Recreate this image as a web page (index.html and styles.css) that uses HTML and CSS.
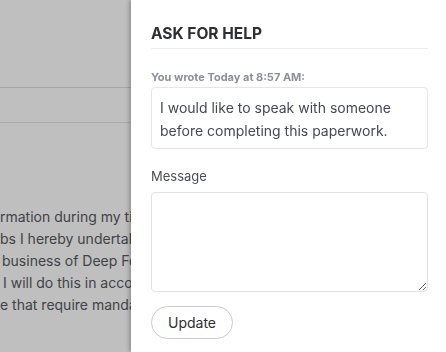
FILE: index.html
```html
<!DOCTYPE html>
<html>
<head>
<meta charset="utf-8">
<link rel="stylesheet" href="styles.css">
</head>
<body>
<div class="page">
  <div class="topbar"></div>
  <div class="subbar"></div>
  <div class="doc">
    <div class="doc-line">rmation during my time at Deep Forest</div>
    <div class="doc-line">bs I hereby undertake to keep confidential</div>
    <div class="doc-line l3">business of Deep Forest and its clients</div>
    <div class="doc-line l4">I will do this in accordance with the policies</div>
    <div class="doc-line">e that require mandatory disclosure</div>
  </div>
</div>
<div class="overlay"></div>
<aside class="panel">
  <h2 class="panel-title">ASK FOR HELP</h2>
  <div class="meta">You wrote Today at 8:57 AM:</div>
  <div class="quote">I would like to speak with someone before completing this paperwork.</div>
  <label class="field-label" for="msg">Message</label>
  <textarea id="msg" class="field"></textarea>
  <button class="btn">Update</button>
</aside>
</body>
</html>
```

FILE: styles.css
```css
html, body {
  margin: 0;
  padding: 0;
}
body {
  font-family: Inter, "Noto Sans", sans-serif;
  background: #ffffff;
  width: 446px;
  height: 352px;
  overflow: hidden;
}
.page {
  display: flex;
  flex-direction: column;
}
.topbar {
  height: 87px;
  border-bottom: 1px solid #dcdcdc;
}
.subbar {
  height: 34px;
  border-bottom: 1px solid #e6e6e6;
}
.doc {
  padding-top: 83px;
  display: flex;
  flex-direction: column;
}
.doc-line {
  font-size: 14px;
  line-height: 22px;
  color: #555a60;
  white-space: nowrap;
  margin-left: 0;
}
.doc-line.l3 { margin-left: 2px; }
.doc-line.l4 { margin-left: 3px; }
.overlay {
  position: fixed;
  inset: 0;
  background: rgba(0, 0, 0, 0.25);
}
.panel {
  position: fixed;
  top: 0;
  right: 0;
  bottom: 0;
  width: 277px;
  background: #ffffff;
  padding: 24px 18px 0 20px;
  box-shadow: -2px 0 4px rgba(0, 0, 0, 0.25);
  display: flex;
  flex-direction: column;
  align-items: flex-start;
}
.panel-title {
  margin: 0;
  align-self: stretch;
  font-size: 15.5px;
  line-height: 20px;
  font-weight: 700;
  color: #2d2f33;
  padding-bottom: 4px;
  border-bottom: 1px solid #ececec;
}
.meta {
  margin-top: 21px;
  font-size: 11px;
  line-height: 14px;
  font-weight: 700;
  color: #8a8f98;
}
.quote {
  margin-top: 3px;
  align-self: stretch;
  border: 1px solid #e4e6ea;
  border-radius: 4px;
  padding: 8px 8px 6px;
  font-size: 14px;
  line-height: 23px;
  color: #444a52;
}
.field-label {
  margin-top: 19px;
  font-size: 13px;
  line-height: 16px;
  color: #4a4f56;
}
.field {
  margin-top: 8px;
  align-self: stretch;
  box-sizing: border-box;
  height: 100px;
  border: 1px solid #dfe2e8;
  border-radius: 4px;
  font-family: inherit;
  resize: vertical;
}
.btn {
  margin-top: 14px;
  width: 82px;
  height: 33px;
  border: 1px solid #c9c9c9;
  border-radius: 17px;
  background: #ffffff;
  font-family: inherit;
  font-size: 14px;
  color: #2d2f33;
  padding: 0;
}
```
